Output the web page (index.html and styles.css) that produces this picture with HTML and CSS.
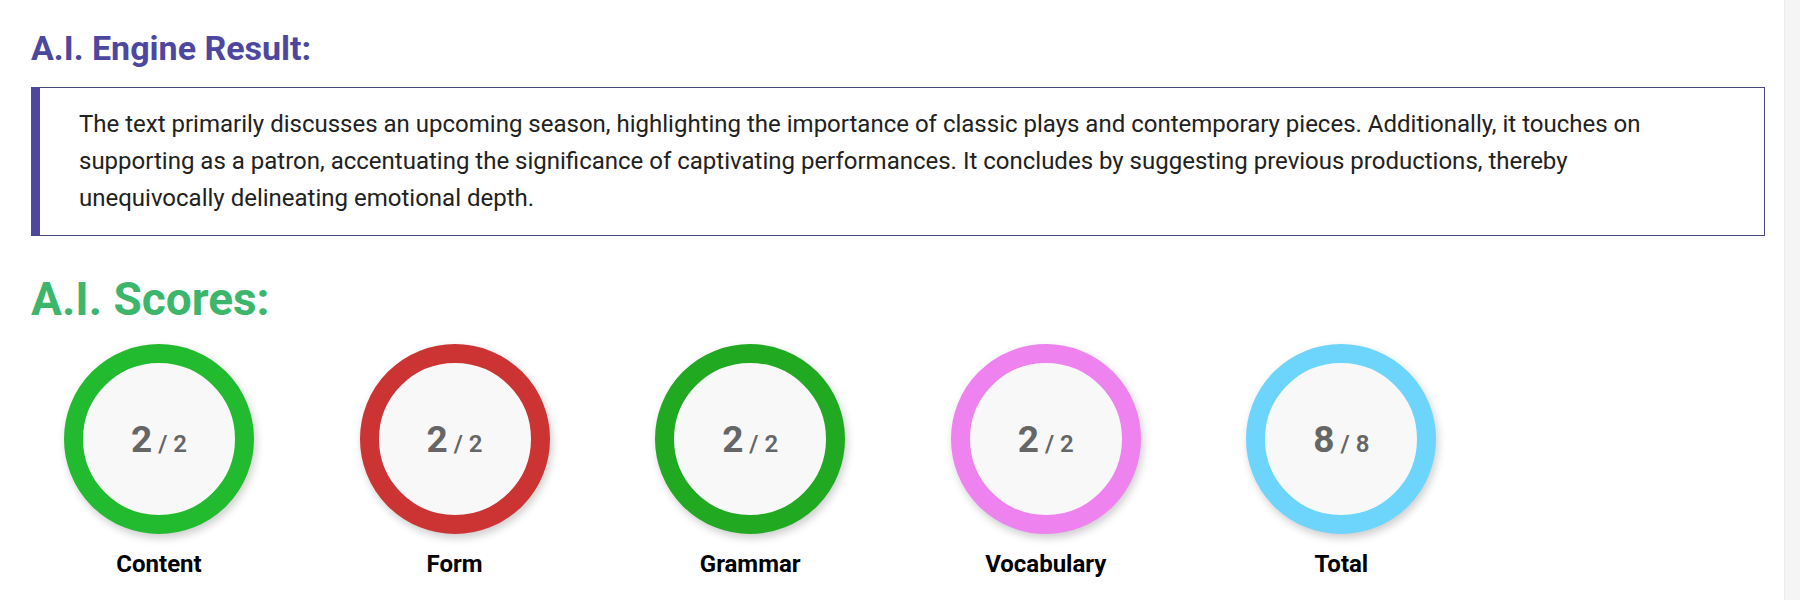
FILE: index.html
```html
<!DOCTYPE html>
<html lang="en">
<head>
  <meta charset="UTF-8" />
  <meta name="viewport" content="width=device-width, initial-scale=1.0"/>
  <title>A.I. Result</title>
  <link rel="stylesheet" href="styles.css">
</head>
<body>

  <main class="page">
    <h2 class="result-title">A.I. Engine Result:</h2>

    <div class="result-box">
      <p>The text primarily discusses an upcoming season, highlighting the importance of classic plays and contemporary pieces. Additionally, it touches on supporting as a patron, accentuating the significance of captivating performances. It concludes by suggesting previous productions, thereby unequivocally delineating emotional depth.</p>
    </div>

    <h2 class="scores-title">A.I. Scores:</h2>

    <div class="scores">
      <div class="score">
        <div class="ring ring-content">
          <span class="value">2<small> / 2</small></span>
        </div>
        <div class="label">Content</div>
      </div>

      <div class="score">
        <div class="ring ring-form">
          <span class="value">2<small> / 2</small></span>
        </div>
        <div class="label">Form</div>
      </div>

      <div class="score">
        <div class="ring ring-grammar">
          <span class="value">2<small> / 2</small></span>
        </div>
        <div class="label">Grammar</div>
      </div>

      <div class="score">
        <div class="ring ring-vocab">
          <span class="value">2<small> / 2</small></span>
        </div>
        <div class="label">Vocabulary</div>
      </div>

      <div class="score">
        <div class="ring ring-total">
          <span class="value">8<small> / 8</small></span>
        </div>
        <div class="label">Total</div>
      </div>
    </div>
  </main>

  <div class="scrollbar"></div>

</body>
</html>
```

FILE: styles.css
```css
:root {
  --purple: #4d479f;
  --box-border: #4b4a7e;
  --green-title: #3cb66a;
  --text-color: #212121;
  --number: #666666;
}

body {
  margin: 0;
  font-family: Roboto, "Liberation Sans", Arial, sans-serif;
  background-color: white;
  color: var(--text-color);
}

.page {
  padding: 28px 35px 0 31px;
}

.result-title {
  margin: 0;
  font-size: 34px;
  line-height: 40px;
  font-weight: 700;
  color: var(--purple);
}

.result-box {
  margin-top: 19px;
  border: 1px solid var(--box-border);
  border-left: 9px solid var(--purple);
  padding: 18px 60px 18px 39px;
}

.result-box p {
  margin: 0;
  font-size: 24px;
  line-height: 37px;
}

.scores-title {
  margin: 37px 0 0;
  font-size: 46px;
  line-height: 52px;
  font-weight: 700;
  color: var(--green-title);
}

.scores {
  display: flex;
  gap: 105.6px;
  padding-left: 33px;
  margin-top: 19px;
}

.score {
  width: 190px;
  display: flex;
  flex-direction: column;
  align-items: center;
}

.ring {
  width: 190px;
  height: 190px;
  box-sizing: border-box;
  border-radius: 50%;
  border: 19px solid #ccc;
  background-color: #f8f8f8;
  box-shadow: 2px 4px 9px rgba(0,0,0,0.2);
  display: flex;
  align-items: center;
  justify-content: center;
}

.ring-content { border-color: #22bb2f; }
.ring-form { border-color: #cc3333; }
.ring-grammar { border-color: #21aa21; }
.ring-vocab { border-color: #ee82ee; }
.ring-total { border-color: #6dd5fb; }

.value {
  font-size: 37px;
  font-weight: 700;
  color: var(--number);
}

.value small {
  font-size: 24px;
  font-weight: 600;
}

.label {
  margin-top: 16px;
  font-size: 24px;
  font-weight: 700;
  color: #000;
}

.scrollbar {
  position: fixed;
  top: 0;
  right: 0;
  width: 15px;
  height: 100%;
  background-color: #f5f5f5;
  border-left: 1px solid #ececec;
}
```
